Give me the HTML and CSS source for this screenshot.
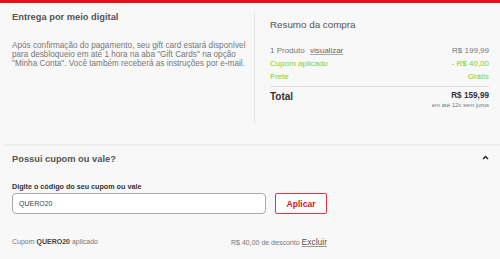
FILE: index.html
```html
<!DOCTYPE html>
<html lang="pt-BR">
<head>
<meta charset="utf-8">
<link rel="stylesheet" href="styles.css">
</head>
<body>
<div class="topbar"></div>
<div class="top">
  <div class="delivery">
    <h2 class="delivery-title">Entrega por meio digital</h2>
    <p class="delivery-text">Após confirmação do pagamento, seu gift card estará disponível para desbloqueio em até 1 hora na aba "Gift Cards" na opção "Minha Conta". Você também receberá as instruções por e-mail.</p>
  </div>
  <div class="summary">
    <h2 class="summary-title">Resumo da compra</h2>
    <div class="rows">
      <div class="row"><span>1 Produto <a class="link">visualizar</a></span><span>R$ 199,99</span></div>
      <div class="row green"><span>Cupom aplicado</span><span>- R$ 40,00</span></div>
      <div class="row green"><span>Frete</span><span>Grátis</span></div>
    </div>
    <div class="total">
      <span class="total-label">Total</span>
      <div class="total-val">
        <span class="total-price">R$ 159,99</span>
        <span class="total-note">em até 12x sem juros</span>
      </div>
    </div>
  </div>
</div>
<div class="coupon">
  <div class="coupon-head">
    <h2 class="coupon-title">Possui cupom ou vale?</h2>
    <svg class="chev" width="7" height="5" viewBox="0 0 7 5"><path d="M1 4 L3.5 1.5 L6 4" fill="none" stroke="#222" stroke-width="1.5"/></svg>
  </div>
  <label class="coupon-label">Digite o código do seu cupom ou vale</label>
  <div class="coupon-form">
    <div class="input">QUERO20</div>
    <button class="btn">Aplicar</button>
  </div>
  <div class="applied">
    <span>Cupom <b>QUERO20</b> aplicado</span>
    <span>R$ 40,00 de desconto <a class="excluir">Excluir</a></span>
  </div>
</div>
</body>
</html>
```
FILE: styles.css
```css
* { box-sizing: border-box; }
html, body { margin: 0; padding: 0; }
body {
  width: 500px;
  height: 259px;
  background: #f8f8f8;
  font-family: "Liberation Sans", Arial, sans-serif;
  color: #666;
  overflow: hidden;
}
.topbar { height: 3px; background: #e3111b; }
.top {
  display: flex;
  padding: 9px 11px 0 12px;
  height: 141px;
}
.delivery { width: 242px; }
.delivery-title {
  margin: -1px 0 0;
  font-size: 9.3px;
  line-height: 12px;
  font-weight: bold;
  color: #555;
}
.delivery-text {
  margin: 18px 0 0;
  font-size: 8.2px;
  line-height: 9px;
  color: #777;
  padding-right: 8px;
}
.summary {
  flex: 1;
  border-left: 1px solid #e4e4e4;
  padding-left: 15px;
  height: 111px;
}
.summary-title {
  margin: 7px 0 0;
  font-size: 9.8px;
  line-height: 12px;
  font-weight: normal;
  color: #555;
}
.rows { margin-top: 13px; }
.row {
  display: flex;
  justify-content: space-between;
  font-size: 8px;
  line-height: 13px;
  color: #777;
}
.link { color: #666; text-decoration: underline; text-decoration-color: #aaa; margin-left: 3px; }
.green { color: #7ed321; }
.total {
  display: flex;
  justify-content: space-between;
  border-top: 1px solid #e0e0e0;
  margin-top: 3px;
  padding-top: 3px;
}
.total-label { font-size: 10px; font-weight: bold; color: #333; line-height: 14px; }
.total-val { display: flex; flex-direction: column; align-items: flex-end; }
.total-price { font-size: 8.2px; font-weight: bold; color: #333; line-height: 10px; margin-top: 1px; }
.total-note { font-size: 6px; color: #777; line-height: 8px; }
.coupon {
  border-top: 2px solid #efefef;
  margin-left: 4px;
  padding: 0 11px 0 8px;
}
.coupon-head { display: flex; justify-content: space-between; align-items: center; margin-top: 6px; }
.coupon-title {
  margin: 0;
  font-size: 9.3px;
  line-height: 14px;
  font-weight: bold;
  color: #555;
}
.chev { margin-top: -4px; }
.coupon-label {
  display: block;
  margin-top: 16px;
  font-size: 7.2px;
  line-height: 9px;
  font-weight: bold;
  color: #333;
}
.coupon-form { display: flex; gap: 9px; margin-top: 2px; }
.input {
  width: 254px;
  height: 21px;
  border: 1px solid #aaa;
  border-radius: 4px;
  background: #fff;
  font-size: 7px;
  line-height: 19px;
  padding-left: 6px;
  color: #444;
}
.btn {
  width: 52px;
  height: 21px;
  border: 1.5px solid #e8333f;
  border-radius: 2px;
  background: #fff;
  color: #e3111b;
  font-family: "Liberation Sans", Arial, sans-serif;
  font-weight: bold;
  font-size: 8.6px;
  padding: 0;
}
.applied {
  display: flex;
  justify-content: space-between;
  width: 315px;
  margin-top: 22px;
  font-size: 7px;
  line-height: 12px;
  color: #777;
}
.applied b { color: #444; }
.excluir { font-size: 8.5px; color: #555; text-decoration: underline; text-decoration-color: #999; }
```
